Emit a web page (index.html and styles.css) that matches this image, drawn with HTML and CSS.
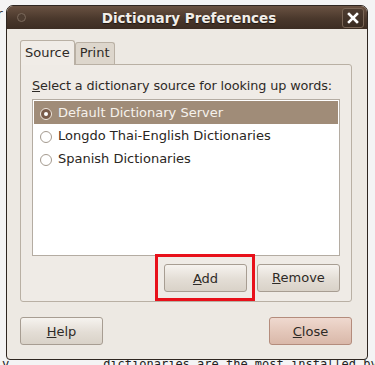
FILE: index.html
```html
<!DOCTYPE html>
<html lang="en">
<head>
  <meta charset="UTF-8">
  <title>Dictionary Preferences</title>
  <link rel="stylesheet" href="styles.css">
</head>
<body>
  <div class="behind">
    <div class="behind-left">r</div>
    <div class="behind-bottom">y &nbsp;&nbsp;&nbsp;&nbsp;&nbsp;&nbsp;&nbsp;&nbsp;&nbsp;&nbsp;&nbsp;&nbsp;dictionaries are the most installed by Y</div>
  </div>

  <div class="window">
    <div class="titlebar">
      <span class="menu-dot"></span>
      <span class="title">Dictionary Preferences</span>
      <span class="close-x">
        <svg width="12" height="12" viewBox="0 0 12 12">
          <path d="M2 2 L10 10 M10 2 L2 10" stroke="#fff" stroke-width="2.6" stroke-linecap="square"/>
        </svg>
      </span>
    </div>

    <div class="content">
      <div class="tabs">
        <div class="tab active">Source</div>
        <div class="tab">Print</div>
      </div>

      <div class="panel">
        <div class="caption"><u>S</u>elect a dictionary source for looking up words:</div>

        <div class="list">
          <div class="row selected"><span class="radio on"></span>Default Dictionary Server</div>
          <div class="row"><span class="radio"></span>Longdo Thai-English Dictionaries</div>
          <div class="row"><span class="radio"></span>Spanish Dictionaries</div>
        </div>

        <div class="list-buttons">
          <div class="highlight">
            <button class="btn"><u>A</u>dd</button>
          </div>
          <button class="btn"><u>R</u>emove</button>
        </div>
      </div>

      <div class="dialog-buttons">
        <button class="btn"><u>H</u>elp</button>
        <button class="btn default"><u>C</u>lose</button>
      </div>
    </div>
  </div>
</body>
</html>
```

FILE: styles.css
```css
body {
  margin: 0;
  width: 375px;
  height: 365px;
  overflow: hidden;
  background: #f4f4f4;
  font-family: 'DejaVu Sans', sans-serif;
  font-size: 13px;
  color: #2e2a26;
  position: relative;
}

.behind-left {
  position: absolute;
  left: -3px;
  top: 6px;
  font-size: 14px;
  color: #333;
}

.behind-bottom {
  position: absolute;
  left: 2px;
  top: 357px;
  font-family: 'DejaVu Sans Mono', monospace;
  font-size: 12px;
  color: #222;
  white-space: nowrap;
}

.window {
  position: relative;
  margin: 5px 0 0 6px;
  width: 362px;
  height: 355px;
  box-sizing: border-box;
  border: 1px solid #2e2620;
  border-radius: 7px 7px 4px 4px;
  background: #ede9e3;
  overflow: hidden;
  display: flex;
  flex-direction: column;
}

.titlebar {
  height: 23px;
  background: linear-gradient(#6a5242, #4a382c 55%, #3c2d23);
  display: flex;
  align-items: center;
  padding: 0 3px 0 10px;
  flex-shrink: 0;
}

.menu-dot {
  width: 9px;
  height: 9px;
  border-radius: 50%;
  border: 1px solid #7c6a5c;
  background: #4e3d31;
  box-sizing: border-box;
}

.title {
  flex: 1;
  text-align: center;
  color: #f2eee9;
  font-weight: bold;
  font-size: 13.5px;
  text-shadow: 0 1px 1px #1e1611;
  margin-left: 10px;
}

.close-x {
  width: 20px;
  height: 18px;
  border: 1px solid #7a6656;
  border-radius: 3px;
  background: linear-gradient(#4e3c30, #3a2c22);
  display: flex;
  align-items: center;
  justify-content: center;
}

.content {
  flex: 1;
  padding: 11px 15px 14px 13px;
  display: flex;
  flex-direction: column;
}

.tabs {
  display: flex;
  align-items: flex-end;
  height: 24px;
}

.tab {
  padding: 0 4px;
  height: 21px;
  line-height: 20px;
  border: 1px solid #b9b0a4;
  border-bottom: none;
  border-radius: 3px 3px 0 0;
  background: #ddd6cc;
  color: #2e2a26;
}

.tab.active {
  height: 24px;
  line-height: 24px;
  background: #f0ece7;
  position: relative;
  top: 1px;
  z-index: 1;
}

.panel {
  height: 238px;
  box-sizing: border-box;
  border: 1px solid #b9b0a4;
  border-radius: 0 3px 3px 3px;
  background: #efebe6;
  padding: 12px 11px 0 11px;
}

.caption {
  height: 22px;
  line-height: 17px;
  white-space: nowrap;
  font-size: 12.8px;
  letter-spacing: -0.1px;
}

.list {
  height: 157px;
  box-sizing: border-box;
  background: #fff;
  border: 1px solid #b4aca2;
  padding: 1px;
}

.row {
  height: 23px;
  display: flex;
  align-items: center;
  padding-left: 6px;
  color: #2a2622;
}

.row.selected {
  background: #a08c78;
  color: #f6f2ec;
}

.radio {
  width: 12px;
  height: 12px;
  box-sizing: border-box;
  border-radius: 50%;
  border: 1px solid #a49a8f;
  background: #fff;
  margin-right: 6px;
  margin-top: 2px;
  position: relative;
  flex-shrink: 0;
}

.radio.on {
  border-color: #f0e8df;
  background: #7a5c4a;
}

.radio.on::after {
  content: "";
  position: absolute;
  left: 3px;
  top: 3px;
  width: 4px;
  height: 4px;
  border-radius: 50%;
  background: #fff;
}

.list-buttons {
  display: flex;
  justify-content: flex-end;
  align-items: center;
  gap: 2px;
  margin-top: -2px;
}

.highlight {
  border: 3px solid #e8101a;
  padding: 7px 5px 6px 6px;
}

.btn {
  width: 83px;
  height: 28px;
  box-sizing: border-box;
  border: 1px solid #a79d92;
  border-radius: 3px;
  background: linear-gradient(#f6f3ef, #e3ddd5 55%, #d9d2c8);
  font-family: 'DejaVu Sans', sans-serif;
  font-size: 13px;
  color: #2e2a26;
  padding: 0;
}

.dialog-buttons {
  display: flex;
  justify-content: space-between;
  margin-top: 15px;
}

.btn.default {
  background: linear-gradient(#efd9cf, #e3c6b9 55%, #d9b8a9);
  border-color: #b48c7c;
}
```
